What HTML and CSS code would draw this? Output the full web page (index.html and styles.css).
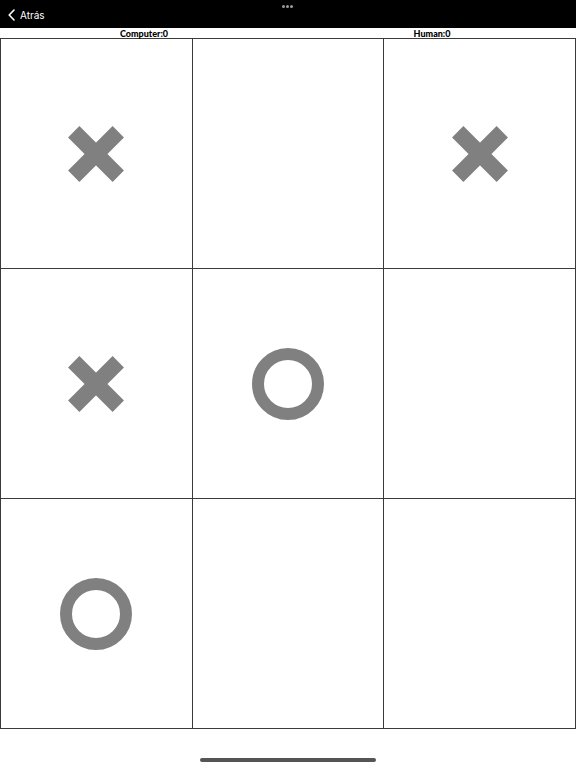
FILE: index.html
```html
<!DOCTYPE html>
<html lang="es">

<head>
    <meta charset="UTF-8">
    <meta name="viewport" content="width=device-width, initial-scale=1.0">
    <title>Tres en raya</title>
    <link rel="stylesheet" href="styles.css">
</head>

<body>
    <div class="topBar">
        <div class="back">
            <svg class="chevron" width="7" height="12" viewBox="0 0 7 12">
                <path d="M6 1 L1.2 6 L6 11" fill="none" stroke="#fff" stroke-width="1.6" stroke-linecap="round" stroke-linejoin="round" />
            </svg>
            <span>Atrás</span>
        </div>
        <div class="dots"><i></i><i></i><i></i></div>
    </div>

    <div class="scores">
        <p class="score">Computer:0</p>
        <p class="score">Human:0</p>
    </div>

    <div class="board">
        <div class="cell">
            <svg class="mark" width="60" height="60" viewBox="0 0 60 60">
                <rect x="-1.5" y="22" width="63" height="16" fill="#808080" transform="rotate(45 30 30)" />
                <rect x="-1.5" y="22" width="63" height="16" fill="#808080" transform="rotate(-45 30 30)" />
            </svg>
        </div>
        <div class="cell"></div>
        <div class="cell">
            <svg class="mark" width="60" height="60" viewBox="0 0 60 60">
                <rect x="-1.5" y="22" width="63" height="16" fill="#808080" transform="rotate(45 30 30)" />
                <rect x="-1.5" y="22" width="63" height="16" fill="#808080" transform="rotate(-45 30 30)" />
            </svg>
        </div>
        <div class="cell">
            <svg class="mark" width="60" height="60" viewBox="0 0 60 60">
                <rect x="-1.5" y="22" width="63" height="16" fill="#808080" transform="rotate(45 30 30)" />
                <rect x="-1.5" y="22" width="63" height="16" fill="#808080" transform="rotate(-45 30 30)" />
            </svg>
        </div>
        <div class="cell">
            <svg class="mark" width="74" height="74" viewBox="0 0 74 74">
                <circle cx="37" cy="37" r="30" fill="none" stroke="#808080" stroke-width="12" />
            </svg>
        </div>
        <div class="cell"></div>
        <div class="cell">
            <svg class="mark" width="74" height="74" viewBox="0 0 74 74">
                <circle cx="37" cy="37" r="30" fill="none" stroke="#808080" stroke-width="12" />
            </svg>
        </div>
        <div class="cell"></div>
        <div class="cell"></div>
    </div>

    <div class="bottom">
        <div class="homeBar"></div>
    </div>
</body>

</html>
```

FILE: styles.css
```css
body {
    margin: 0;
    background-color: white;
    font-family: Lato, "Liberation Sans", sans-serif;
}

.topBar {
    height: 28px;
    background-color: black;
    display: flex;
    align-items: center;
    padding-left: 8px;
}

.back {
    display: flex;
    align-items: center;
    gap: 5px;
    color: white;
    font-family: Inter, Roboto, sans-serif;
    font-size: 10px;
    margin-top: 1px;
}

.dots {
    position: absolute;
    top: 5px;
    left: 282px;
    display: flex;
    gap: 1px;
}

.dots i {
    width: 3px;
    height: 3px;
    border-radius: 50%;
    background-color: #9a9a9a;
}

.scores {
    display: flex;
    height: 10px;
}

.score {
    flex: 1;
    margin: 0;
    text-align: center;
    font-size: 9px;
    font-weight: 900;
    line-height: 11px;
    color: black;
}

.board {
    display: grid;
    grid-template-columns: repeat(3, 1fr);
    grid-template-rows: repeat(3, 229px);
    gap: 1px;
    padding: 1px;
    background-color: #3a3a3a;
}

.cell {
    background-color: white;
    display: flex;
    align-items: center;
    justify-content: center;
}

.bottom {
    height: 39px;
    display: flex;
    justify-content: center;
    align-items: flex-end;
}

.homeBar {
    width: 176px;
    height: 4px;
    border-radius: 2px;
    background-color: #555;
    margin-bottom: 6px;
}
```
